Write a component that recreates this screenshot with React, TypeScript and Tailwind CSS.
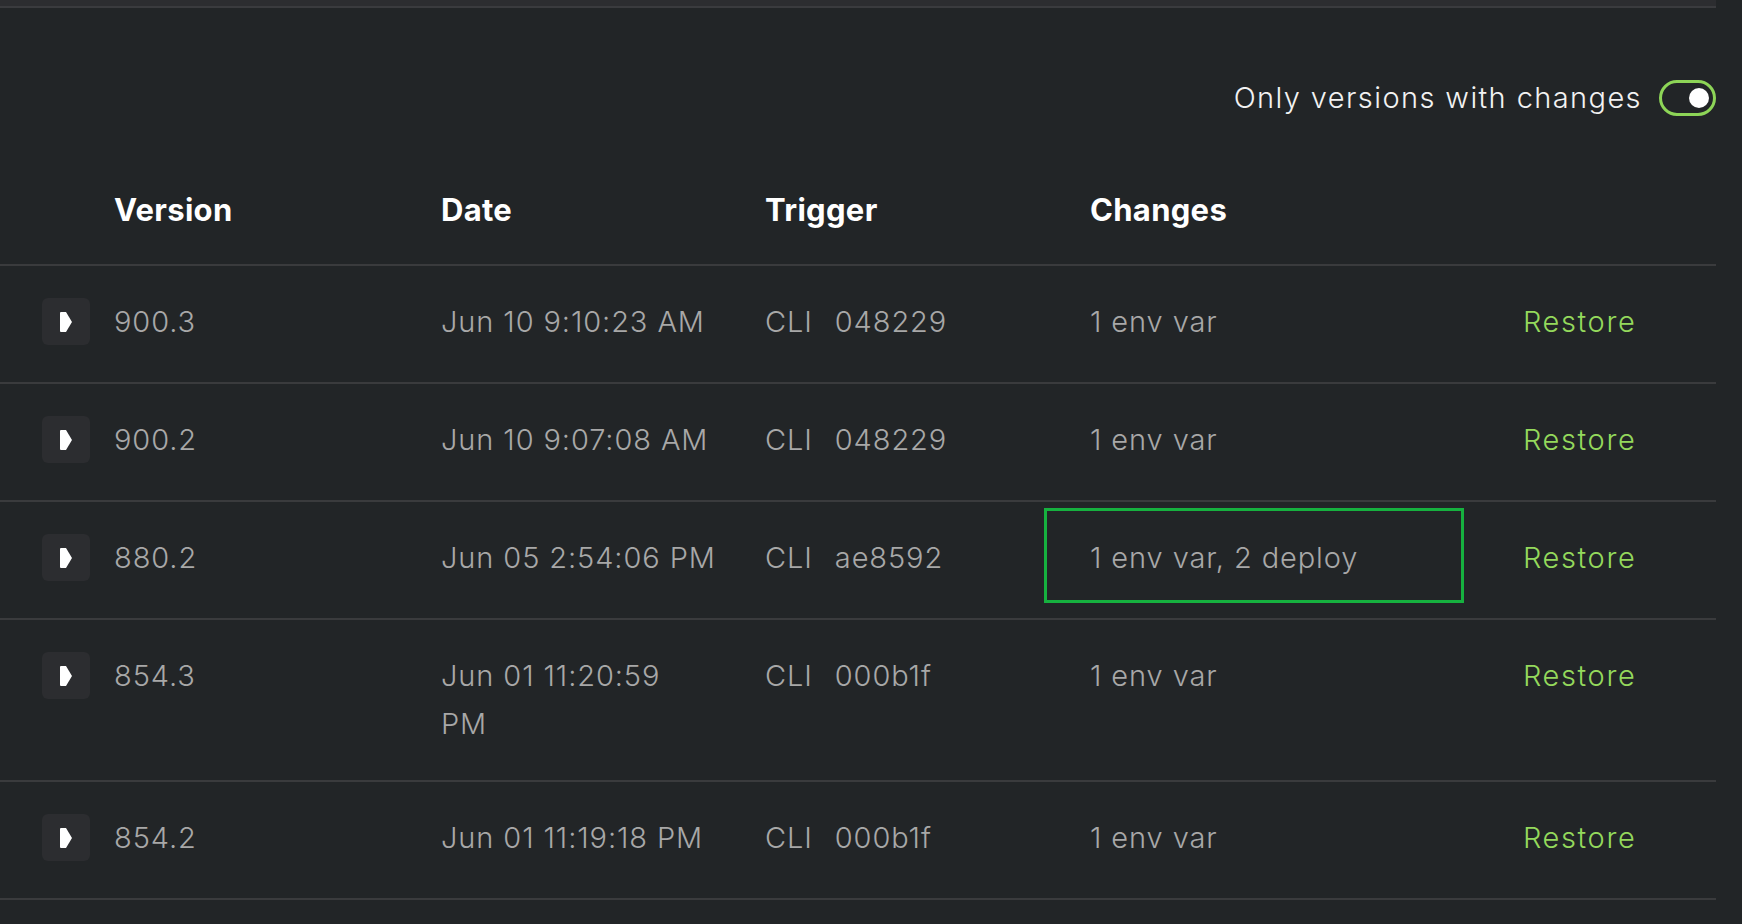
import { useState } from "react";

type Version = {
  id: string;
  date: string;
  commit: string;
  changes: string;
  highlight?: boolean;
};

// the long date wraps in the original column, keep the break explicit
const versions: Version[] = [
  { id: "900.3", date: "Jun 10 9:10:23 AM", commit: "048229", changes: "1 env var" },
  { id: "900.2", date: "Jun 10 9:07:08 AM", commit: "048229", changes: "1 env var" },
  { id: "880.2", date: "Jun 05 2:54:06 PM", commit: "ae8592", changes: "1 env var, 2 deploy", highlight: true },
  { id: "854.3", date: "Jun 01 11:20:59\nPM", commit: "000b1f", changes: "1 env var" },
  { id: "854.2", date: "Jun 01 11:19:18 PM", commit: "000b1f", changes: "1 env var" },
];

const cols = "grid grid-cols-[114px_327px_324px_325px_433px_1fr]";

function ExpandButton() {
  return (
    <button className="flex h-[47px] w-[48px] items-center justify-center rounded-md bg-[#2c2d30]">
      <svg width="12" height="20" viewBox="0 0 12 20" fill="#ffffff">
        <path d="M1 0 H6 L12 10 L6 20 H1 Q0 20 0 19 V1 Q0 0 1 0 Z" />
      </svg>
    </button>
  );
}

function App() {
  const [onlyChanges, setOnlyChanges] = useState(true);

  return (
    <div
      className="min-h-screen w-full bg-[#222527] text-[29px]"
      style={{ fontFamily: "Inter, 'Open Sans', sans-serif" }}
    >
      <div className="w-[1716px]">
        {/* top bar */}
        <div className="h-[8px] border-b-2 border-[#3a3b3e] bg-[#2c2d30]" />

        {/* toggle */}
        <div className="mt-[72px] flex items-center justify-end gap-[17px]">
          <span className="font-light leading-[36px] tracking-[1.4px] text-[#f2f2f2]">Only versions with changes</span>
          <button
            onClick={() => setOnlyChanges(!onlyChanges)}
            className={
              "flex h-[36px] w-[57px] items-center rounded-full border-[3px] border-[#8dd557] px-[4px] " +
              (onlyChanges ? "justify-end" : "justify-start")
            }
          >
            <span className="block h-[20px] w-[20px] rounded-full bg-white" />
          </button>
        </div>

        {/* header */}
        <div className={cols + " border-b-2 border-[#3a3b3d] pt-[70px] pb-[30px] text-[31px] font-bold leading-[48px] tracking-[0.3px] text-white"}>
          <div />
          <div>Version</div>
          <div>Date</div>
          <div>Trigger</div>
          <div>Changes</div>
          <div />
        </div>

        {/* rows */}
        {versions.map((v) => (
          <div
            key={v.id}
            className={cols + " items-start border-b-2 border-[#3a3b3d] py-[32px] font-light leading-[48px] tracking-[0.9px] text-[#a8a8a8]"}
          >
            <div className="pl-[42px]">
              <ExpandButton />
            </div>
            <div>{v.id}</div>
            <div className="whitespace-pre-line">{v.date}</div>
            <div>
              <span>CLI</span>
              <span className="ml-[22px]">{v.commit}</span>
            </div>
            <div className="relative">
              {v.changes}
              {v.highlight && (
                <div className="pointer-events-none absolute left-[-46px] top-[-26px] h-[95px] w-[420px] border-[3px] border-[#16b13f]" />
              )}
            </div>
            <div className="h-[52px] tracking-[1.6px] text-[#94d95c]">Restore</div>
          </div>
        ))}
      </div>
    </div>
  );
}

export default App;
